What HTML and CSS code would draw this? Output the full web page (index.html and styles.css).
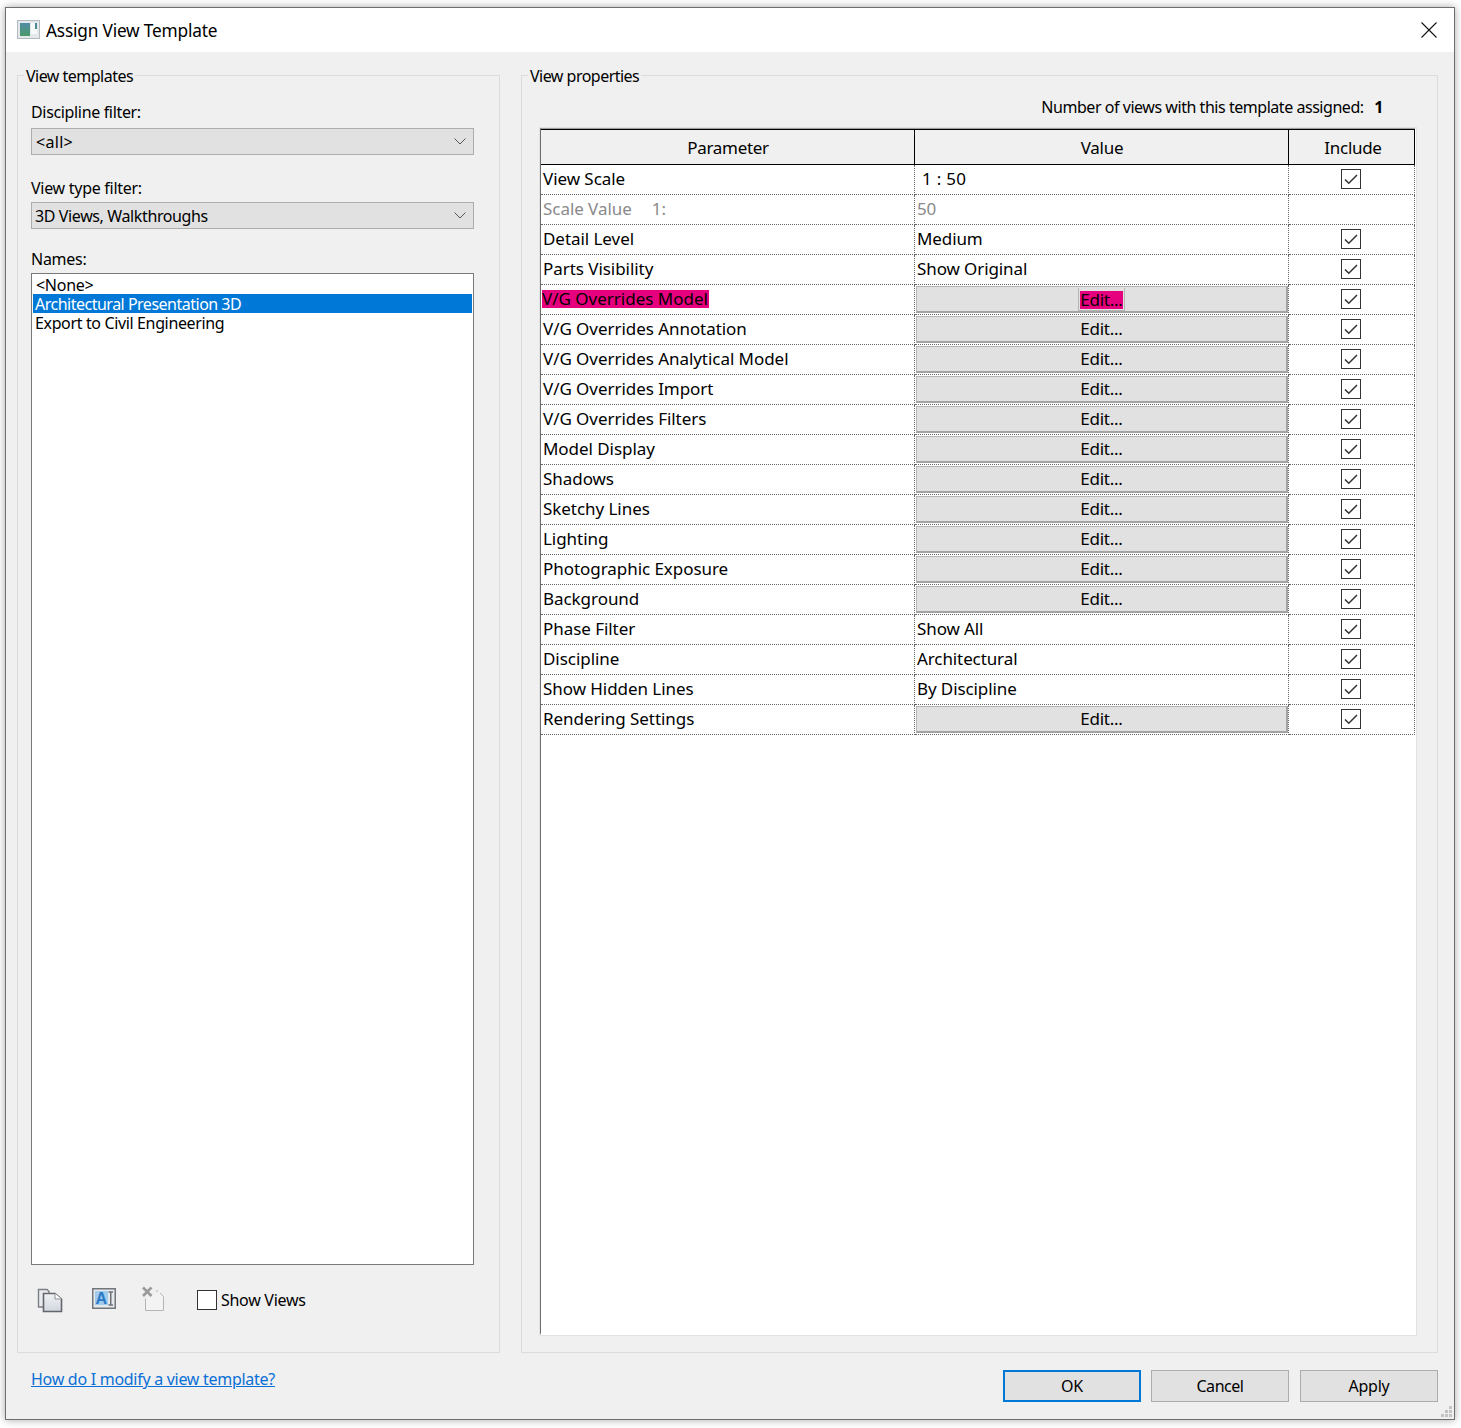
FILE: index.html
```html
<!DOCTYPE html>
<html lang="en">
<head>
<meta charset="utf-8">
<title>Assign View Template</title>
<link rel="stylesheet" href="styles.css">
</head>
<body>
<div class="window">
  <header class="titlebar">
    <svg class="app-icon" width="24" height="20" viewBox="0 0 24 20">
      <defs><linearGradient id="ag" x1="0" y1="0" x2="0" y2="1"><stop offset="0" stop-color="#4f8ba6"/><stop offset="1" stop-color="#4a9a68"/></linearGradient></defs>
      <rect x="0.5" y="0.5" width="22" height="18" fill="#e4e8eb" stroke="#b3bbc1"/>
      <rect x="3" y="3" width="10" height="13" fill="url(#ag)"/>
      <rect x="14" y="3" width="6" height="11" fill="#f7f8f8"/>
      <rect x="18" y="3" width="2" height="6" fill="#4a8a94"/>
    </svg>
    <span class="title">Assign View Template</span>
    <svg class="close" width="16" height="16" viewBox="0 0 16 16"><path d="M0.5 0.5L15.5 15.5M15.5 0.5L0.5 15.5" stroke="#111" stroke-width="1.1" fill="none"/></svg>
  </header>
  <div class="body">
    <div class="groups">
      <section class="group group-left">
        <h2 class="legend">View templates</h2>
        <label class="field-label label-1">Discipline filter:</label>
        <div class="select"><span class="sel-all">&lt;all&gt;</span>
          <svg width="12" height="7" viewBox="0 0 12 7"><path d="M0.5 0.5L6 6L11.5 0.5" stroke="#555" fill="none"/></svg></div>
        <label class="field-label label-2">View type filter:</label>
        <div class="select"><span class="sel-type">3D Views, Walkthroughs</span>
          <svg width="12" height="7" viewBox="0 0 12 7"><path d="M0.5 0.5L6 6L11.5 0.5" stroke="#555" fill="none"/></svg></div>
        <label class="field-label label-3">Names:</label>
        <ul class="names">
          <li class="none-item">&lt;None&gt;</li>
          <li class="selected">Architectural Presentation 3D</li>
          <li class="export">Export to Civil Engineering</li>
        </ul>
        <div class="tools">
          <svg class="tool-dup" width="26" height="25" viewBox="0 0 26 25">
            <defs><linearGradient id="dg" x1="0" y1="0" x2="0" y2="1"><stop offset="0" stop-color="#f2f3f6"/><stop offset="1" stop-color="#d0d5de"/></linearGradient></defs>
            <path d="M1.5 1.5H10L12 3.5V19H1.5Z" fill="#e9ebef" stroke="#7b7e84" stroke-width="1.4"/>
            <path d="M6.5 5.5H18L24.5 11V23.5H6.5Z" fill="url(#dg)" stroke="#63666b" stroke-width="1.6"/>
            <path d="M18 5.5V11H24.5" fill="#fff" stroke="#8a8d92"/>
          </svg>
          <svg class="tool-rename" width="24" height="21" viewBox="0 0 24 21">
            <rect x="0.75" y="0.75" width="22.5" height="19.5" fill="#e6e8ea" stroke="#71767c" stroke-width="1.5"/>
            <rect x="3" y="3" width="13" height="14" fill="#9fcbec"/>
            <text class="tool-a" x="3.6" y="16">A</text>
            <path d="M16.5 4H21M16.5 17H21M18.75 4V17" stroke="#6d7278" stroke-width="1.5" fill="none"/>
          </svg>
          <svg class="tool-del" width="24" height="26" viewBox="0 0 24 26">
            <path d="M4.5 12.5V24.5H22.5V10.5L19 7M15 5H17" stroke="#b5b5b5" fill="#f3f3f3"/>
            <path d="M2 1.5L10.5 10M10.5 1.5L2 10" stroke="#9a9a9a" stroke-width="2.6" fill="none"/>
          </svg>
          <span class="show-box"></span>
          <span class="show-label">Show Views</span>
        </div>
      </section>
      <section class="group group-right">
        <h2 class="legend">View properties</h2>
        <p class="count">Number of views with this template assigned: <b>1</b></p>
        <div class="table-frame">
          <table class="props">
            <colgroup><col class="c1"><col class="c2"><col class="c3"></colgroup>
            <thead><tr><th>Parameter</th><th>Value</th><th class="th-inc">Include</th></tr></thead>
            <tbody>
              <tr><td>View Scale</td><td class="v-scale">1 : 50</td><td class="inc"><span class="chk"></span></td></tr>
              <tr class="grey"><td>Scale Value<span class="one">1:</span></td><td class="val">50</td><td class="inc"></td></tr>
              <tr><td>Detail Level</td><td class="val">Medium</td><td class="inc"><span class="chk"></span></td></tr>
              <tr><td>Parts Visibility</td><td class="val">Show Original</td><td class="inc"><span class="chk"></span></td></tr>
              <tr><td class="tight"><mark class="hl">V/G Overrides Model</mark></td><td class="btn-cell"><div class="edit"><span class="focus"><mark class="hl">Edit...</mark></span></div></td><td class="inc"><span class="chk"></span></td></tr>
              <tr><td>V/G Overrides Annotation</td><td class="btn-cell"><div class="edit">Edit...</div></td><td class="inc"><span class="chk"></span></td></tr>
              <tr><td>V/G Overrides Analytical Model</td><td class="btn-cell"><div class="edit">Edit...</div></td><td class="inc"><span class="chk"></span></td></tr>
              <tr><td>V/G Overrides Import</td><td class="btn-cell"><div class="edit">Edit...</div></td><td class="inc"><span class="chk"></span></td></tr>
              <tr><td>V/G Overrides Filters</td><td class="btn-cell"><div class="edit">Edit...</div></td><td class="inc"><span class="chk"></span></td></tr>
              <tr><td>Model Display</td><td class="btn-cell"><div class="edit">Edit...</div></td><td class="inc"><span class="chk"></span></td></tr>
              <tr><td>Shadows</td><td class="btn-cell"><div class="edit">Edit...</div></td><td class="inc"><span class="chk"></span></td></tr>
              <tr><td>Sketchy Lines</td><td class="btn-cell"><div class="edit">Edit...</div></td><td class="inc"><span class="chk"></span></td></tr>
              <tr><td>Lighting</td><td class="btn-cell"><div class="edit">Edit...</div></td><td class="inc"><span class="chk"></span></td></tr>
              <tr><td>Photographic Exposure</td><td class="btn-cell"><div class="edit">Edit...</div></td><td class="inc"><span class="chk"></span></td></tr>
              <tr><td>Background</td><td class="btn-cell"><div class="edit">Edit...</div></td><td class="inc"><span class="chk"></span></td></tr>
              <tr><td>Phase Filter</td><td class="val">Show All</td><td class="inc"><span class="chk"></span></td></tr>
              <tr><td>Discipline</td><td class="val">Architectural</td><td class="inc"><span class="chk"></span></td></tr>
              <tr><td>Show Hidden Lines</td><td class="val">By Discipline</td><td class="inc"><span class="chk"></span></td></tr>
              <tr><td>Rendering Settings</td><td class="btn-cell"><div class="edit">Edit...</div></td><td class="inc"><span class="chk"></span></td></tr>
            </tbody>
          </table>
        </div>
      </section>
    </div>
    <footer class="footer">
      <a class="help" href="#">How do I modify a view template?</a>
      <div class="buttons">
        <button class="btn btn-default">OK</button>
        <button class="btn btn-cancel">Cancel</button>
        <button class="btn btn-apply">Apply</button>
      </div>
    </footer>
    <svg class="grip" width="11" height="11" viewBox="0 0 11 11"><path d="M8 0h3v3H8zM4 4h3v3H4zM8 4h3v3H8zM0 8h3v3H0zM4 8h3v3H4zM8 8h3v3H8z" fill="#c4c4c4"/></svg>
  </div>
</div>
</body>
</html>
```
FILE: styles.css
```css
* { box-sizing: border-box; }
html, body { margin: 0; padding: 0; height: 100%; background: #fff; overflow: hidden; }
body { font-family: "Noto Sans", "Open Sans", sans-serif; font-size: 16px; color: #000; letter-spacing: -0.28px; }

.window {
  width: 1450px; height: 1413px; margin: 7px 0 0 5px;
  border: 1px solid #6e6e6e; background: #f0f0f0;
  box-shadow: 0 0 8px rgba(0,0,0,.35);
  display: flex; flex-direction: column; position: relative;
}
.titlebar { height: 44px; background: #fff; display: flex; align-items: center; padding: 0 17px 0 11px; flex: none; }
.app-icon { margin-right: 5px; margin-top: -1px; }
.title { font-size: 17.3px; letter-spacing: -0.2px; flex: 1; margin-top: 1px; }
.close { margin-top: -1px; }

.body { flex: 1; display: flex; flex-direction: column; padding: 23px 16px 17px 11px; position: relative; }
.groups { display: flex; gap: 21px; height: 1278px; flex: none; }
.group { border: 1px solid #dcdcdc; position: relative; }
.group-left { width: 483px; padding: 0 25px 0 13px; display: flex; flex-direction: column; }
.group-right { width: 917px; padding: 0 21px 17px 18px; display: flex; flex-direction: column; }
.legend { position: absolute; left: 6px; top: -10px; margin: 0; padding: 0 2px; font-size: 16px; font-weight: 400; letter-spacing: -0.52px; line-height: 20px; background: #f0f0f0; }

.field-label { display: block; line-height: 20px; }
.label-1 { margin-top: 26px; margin-bottom: 6px; letter-spacing: -0.34px; }
.label-2 { margin-top: 23px; margin-bottom: 4px; }
.label-3 { margin-top: 20px; margin-bottom: 4px; }
.select { height: 27px; width: 443px; border: 1px solid #adadad; background: #e1e1e1; display: flex; align-items: center; justify-content: space-between; padding: 0 7px 0 3px; }
.sel-all { padding-left: 1px; letter-spacing: 0.3px; }
.sel-type { letter-spacing: -0.38px; }
.names { list-style: none; margin: 0; padding: 1px; width: 443px; height: 992px; border: 1px solid #7a7a7a; background: #fff; flex: none; }
.names li { height: 19px; line-height: 19px; padding-left: 2px; position: relative; top: 1px; }
.names li.none-item { padding-left: 3px; }
.names li.selected { background: #0078d7; color: #fff; letter-spacing: -0.5px; top: 0; line-height: 21px; }
.names li.export { letter-spacing: -0.36px; }

.tools { display: flex; align-items: center; height: 70px; padding-left: 6px; }
.tool-rename { margin-left: 29px; margin-top: -3px; }
.tool-del { margin-left: 25px; margin-top: -2px; }
.tool-a { font-family: "Liberation Sans", sans-serif; font-size: 16px; font-weight: 700; fill: #2a78c6; letter-spacing: 0; }
.show-box { width: 20px; height: 20px; border: 1px solid #333; background: #fff; margin-left: 32px; }
.show-label { margin-left: 4px; }

.count { margin: 0; height: 52px; padding: 21px 33px 0 0; line-height: 20px; text-align: right; flex: none; letter-spacing: -0.46px; }
.count b { margin-left: 7px; }
.table-frame { flex: 1; border-top: 1px solid #9f9f9f; border-left: 1px solid #6e6e6e; border-right: 2px solid #fff; border-bottom: 2px solid #fff; outline: 1px solid #e2e2e2; background: #fff; }
.props { border-collapse: separate; border-spacing: 0; table-layout: fixed; width: 874px; font-size: 17px; letter-spacing: -0.05px; }
.c1 { width: 374px; } .c2 { width: 374px; } .c3 { width: 126px; }
.props th { height: 36px; padding: 2px 0 0 1px; font-weight: 400; background: #f0f0f0; border-top: 1px solid #000; border-right: 1px solid #000; border-bottom: 1px solid #000; text-align: center; line-height: 20px; letter-spacing: -0.3px; }
.props th.th-inc { padding-left: 3px; }
.props td { height: 30px; padding: 0 0 2px 2px; border-bottom: 1px dotted #666; border-right: 1px dotted #666; line-height: 20px; white-space: nowrap; overflow: hidden; }
.props td.val { letter-spacing: -0.1px; }
.props td.v-scale { padding-left: 7px; letter-spacing: .3px; }
.props .grey td { color: #8a8a8a; }
.one { margin-left: 20px; }
.props td.tight { padding: 0 0 0 1px; vertical-align: top; }
.hl { background: #e6007e; color: #000; }
.tight .hl { display: inline-block; height: 18px; line-height: 18px; margin-top: 5px; letter-spacing: 0; padding-right: 1px; }
.props td.btn-cell { padding: 1px 0 0 1px; vertical-align: top; letter-spacing: -0.25px; }
.edit { height: 27px; width: 372px; background: #e1e1e1; border: 1px solid #b5b5b5; border-right: 2px solid #a3a3a3; border-bottom: 2px solid #a3a3a3; text-align: center; line-height: 23px; font-size: 17px; }
.focus { display: inline-block; vertical-align: top; height: 23px; margin-top: 1px; padding: 3px 1px 0; border: 1px solid #b5b5b5; border-top: 0; border-bottom: 1px solid #b5b5b5; }
.focus .hl { display: block; height: 18px; line-height: 18px; }
.props td.inc { padding: 0 0 2px; text-align: center; border-right: 1px dotted #666; }
.chk { display: inline-block; width: 20px; height: 20px; margin: 0 2px 0 0; vertical-align: top; border: 1px solid #333; background: #fff no-repeat center/14px 12px url("data:image/svg+xml,%3Csvg xmlns='http://www.w3.org/2000/svg' viewBox='0 0 14 12'%3E%3Cpath d='M1 6.5L4.8 10.3L13 2' fill='none' stroke='%23333' stroke-width='1.5'/%3E%3C/svg%3E"); }

.footer { display: flex; justify-content: space-between; padding: 17px 0 0 14px; flex: none; }
.help { color: #0a6fd6; line-height: 20px; text-decoration: underline; margin-top: -1px; }
.buttons { display: flex; gap: 10px; }
.btn { width: 138px; height: 32px; padding: 0; border: 1px solid #adadad; background: #e1e1e1; font: inherit; letter-spacing: inherit; color: #000; }
.btn-default { border: 2px solid #0078d7; }
.btn-cancel { letter-spacing: -0.45px; }
.btn-apply { margin-left: 1px; }
.grip { position: absolute; right: 2px; bottom: 2px; }
```
